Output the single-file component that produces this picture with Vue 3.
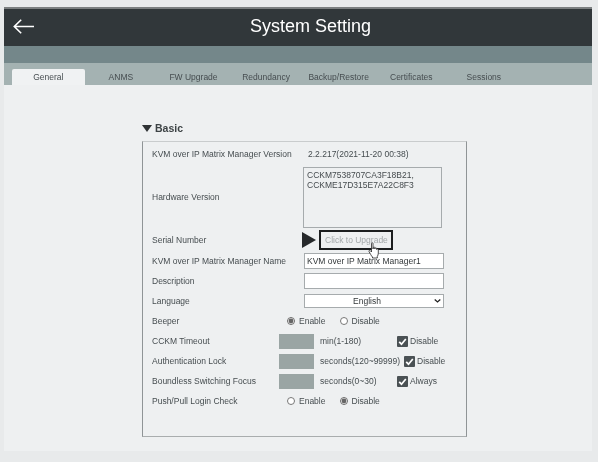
<script setup>
const tabs = ['General', 'ANMS', 'FW Upgrade', 'Redundancy', 'Backup/Restore', 'Certificates', 'Sessions']
const timers = [
  { label: 'CCKM Timeout', unit: 'min(1-180)', check: 'Disable', cls: 'near' },
  { label: 'Authentication Lock', unit: 'seconds(120~99999)', check: 'Disable', cls: 'far' },
  { label: 'Boundless Switching Focus', unit: 'seconds(0~30)', check: 'Always', cls: 'near' }
]
</script>

<template>
  <div class="page">
    <div class="frame">
      <header class="head">
        <svg class="back" width="21" height="15" viewBox="0 0 21 15" fill="none" stroke="#fff" stroke-width="1.600">
          <path d="M21 7.500H1.500M8.200 .8L1.300 7.500l6.900 6.700" />
        </svg>
        <h1>System Setting</h1>
      </header>
      <div class="band"></div>
      <nav class="tabs">
        <div v-for="(t, i) in tabs" :key="t" class="tab" :class="{ on: i === 0 }">{{ t }}</div>
      </nav>
      <main class="body">
        <h2 class="title"><span class="tri"></span>Basic</h2>
        <section class="box">
          <div class="row"><span class="lab">KVM over IP Matrix Manager Version</span><span class="ver">2.2.217(2021-11-20 00:38)</span></div>
          <div class="row hw">
            <span class="lab">Hardware Version</span>
            <div class="area">CCKM7538707CA3F18B21,<br />CCKME17D315E7A22C8F3</div>
          </div>
          <div class="row serial">
            <span class="lab">Serial Number</span>
            <span class="marker"></span>
            <div class="upg">
              Click to Upgrade
              <svg class="hand" width="13" height="17" viewBox="0 0 13 17">
                <path d="M3.500 1.500c0-1 1.500-1 1.500 0V7l.3-1.500c.6-.8 1.400-.5 1.500.3V7l.3-.8c.6-.7 1.400-.4 1.500.3v1l.4-.4c.6-.4 1.300-.1 1.300.6v3.500c0 1.500-.5 2.300-1 3.300v1.500H4.500V15C3 13.500 2.500 12 1 9.500c-.4-1 .6-1.500 1.300-.8l1.200 1.300z" fill="#fff" stroke="#222" stroke-width=".8" stroke-linejoin="round" />
              </svg>
            </div>
          </div>
          <div class="row">
            <span class="lab">KVM over IP Matrix Manager Name</span>
            <input class="field" value="KVM over IP Matrix Manager1" />
          </div>
          <div class="row"><span class="lab">Description</span><input class="field" /></div>
          <div class="row">
            <span class="lab">Language</span>
            <div class="selwrap">
              <select class="field sel"><option>English</option></select>
              <svg class="chev" width="7" height="4" viewBox="0 0 7 4">
                <path d="M.7.5l2.800 2.500L6.300.5" fill="none" stroke="#222" stroke-width="1.300" />
              </svg>
            </div>
          </div>
          <div class="row">
            <span class="lab">Beeper</span>
            <div class="radios">
              <label><input type="radio" name="b" checked />Enable</label>
              <label><input type="radio" name="b" />Disable</label>
            </div>
          </div>
          <div v-for="t in timers" :key="t.label" class="row">
            <span class="lab short">{{ t.label }}</span>
            <div class="num"></div>
            <span class="unit">{{ t.unit }}</span>
            <span class="chk" :class="t.cls">
              <svg width="11" height="11" viewBox="0 0 11 11">
                <rect width="11" height="11" rx="1" fill="#4a5154" />
                <path d="M2.200 5.800l2.300 2.400 4.300-5.200" fill="none" stroke="#fff" stroke-width="1.700" />
              </svg>
              {{ t.check }}
            </span>
          </div>
          <div class="row">
            <span class="lab">Push/Pull Login Check</span>
            <div class="radios">
              <label><input type="radio" name="p" />Enable</label>
              <label><input type="radio" name="p" checked />Disable</label>
            </div>
          </div>
        </section>
      </main>
    </div>
  </div>
</template>

<style>
html, body { margin: 0; background: #e8eaeb; }
</style>

<style scoped>
.page {
  width: 598px;
  height: 462px;
  padding: 7px 6px 11px 4px;
  box-sizing: border-box;
  background: #e8eaeb;
  font-family: "Liberation Sans", Arial, sans-serif;
  font-size: 8.500px;
  color: #464d50;
  overflow: hidden;
  filter: blur(0.3px);
}
.frame { height: 100%; background: #eef0f1; display: flex; flex-direction: column; }
.head {
  height: 39px;
  box-sizing: border-box;
  border-top: 2px solid #7b7f80;
  padding-left: 25px;
  background: #31373a;
  position: relative;
  display: flex;
  align-items: center;
  justify-content: center;
}
.back { position: absolute; left: 8.500px; top: 9.500px; }
h1 { margin: 0 0 2px 0; font-weight: 400; font-size: 18px; color: #fff; }
.band { height: 17px; background: #74878a; }
.tabs { height: 22px; background: #a4b2b2; display: flex; align-items: flex-end; padding-left: 8px; }
.tab {
  width: 72.600px;
  height: 16px;
  line-height: 16px;
  text-align: center;
  border-radius: 2px 2px 0 0;
}
.tab.on { background: #f0f2f3; }
.body { padding: 36px 0 0 138px; }
.title {
  margin: 0;
  height: 20px;
  line-height: 14px;
  font-size: 10.500px;
  font-weight: 700;
  color: #3d4345;
  display: flex;
  align-items: flex-start;
}
.tri {
  width: 0;
  height: 0;
  margin: 4px 3px 0 0;
  border-left: 5px solid transparent;
  border-right: 5px solid transparent;
  border-top: 7px solid #2f3335;
}
.box {
  width: 325px;
  height: 296px;
  box-sizing: border-box;
  border: 1px solid #8f9496;
  border-top-color: #c9cccd;
  border-bottom-color: #a9adae;
  padding: 2px 0 0 9px;
}
.row { height: 20px; display: flex; align-items: center; }
.lab { width: 151px; flex: none; }
.lab.short { width: 127px; }
.ver { margin-left: 5px; }
.hw { height: 66px; }
.area {
  width: 139px;
  height: 61px;
  box-sizing: border-box;
  border: 1px solid #a6abad;
  padding: 2px 3px;
  line-height: 10px;
  color: #444a4d;
  background: #eef0f1;
}
.serial { margin-bottom: 1px; }
.serial .lab { width: 150px; }
.marker {
  width: 0;
  height: 0;
  border-left: 14px solid #26292b;
  border-top: 8.500px solid transparent;
  border-bottom: 8.500px solid transparent;
}
.upg {
  position: relative;
  margin-left: 3px;
  width: 74px;
  height: 20px;
  box-sizing: border-box;
  border: 2px solid #1c1e1f;
  line-height: 16px;
  padding-left: 4px;
  color: #a3a8aa;
  white-space: nowrap;
}
.hand { position: absolute; left: 47px; top: 10px; }
.field {
  width: 140px;
  height: 16px;
  box-sizing: border-box;
  margin: 0 0 0 1px;
  border: 1px solid #a6abad;
  background: #fff;
  font: inherit;
  padding: 0 2px;
  color: #33383a;
  border-radius: 0;
  outline: 0;
}
.selwrap { position: relative; display: flex; }
.sel {
  height: 14px;
  text-align: center;
  padding: 0 14px 0 0;
  appearance: none;
}
.chev { position: absolute; right: 3px; top: 5px; }
.radios { display: flex; margin-left: -16px; }
.radios label { display: flex; align-items: center; width: 52.500px; }
.radios input {
  width: 8px;
  height: 8px;
  margin: 0 4px 0 0;
  accent-color: #666;
}
.num { width: 35px; height: 15px; background: #9aa5a4; flex: none; }
.unit { margin-left: 6px; flex: none; width: 77px; white-space: nowrap; }
.chk { display: flex; align-items: center; gap: 2px; white-space: nowrap; }
.chk.far { margin-left: 7px; }
</style>
